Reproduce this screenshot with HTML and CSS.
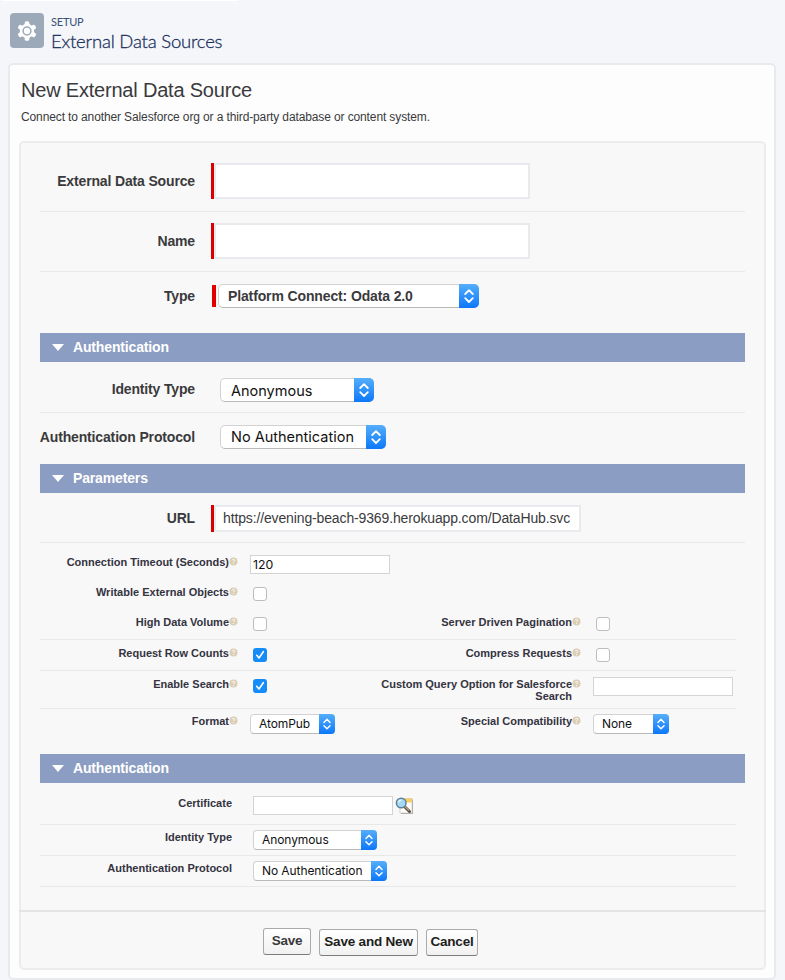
FILE: index.html
```html
<!DOCTYPE html>
<html lang="en">
<head>
<meta charset="utf-8">
<title>External Data Sources</title>
<link rel="stylesheet" href="styles.css">
</head>
<body>
<svg class="defs" aria-hidden="true">
  <symbol id="updown" viewBox="0 0 20 24"><path d="M6.200 10 10 6.200l3.800 3.800M6.200 14.200 10 18l3.800-3.800"/></symbol>
  <symbol id="help" viewBox="0 0 9 9"><circle cx="4.500" cy="4.500" r="4" fill="#dccdb5"/><path d="M3.200 3.400c.2-1.500 2.700-1.300 2.600 0-.1.800-1.300.8-1.300 1.700M4.500 6.200v.9" fill="none" stroke="#fff" stroke-width="1"/></symbol>
  <symbol id="tick" viewBox="0 0 14 14"><path d="M3.700 7.300 6 10l4.300-6.300" fill="none" stroke="#fff" stroke-width="1.600" stroke-linecap="round" stroke-linejoin="round"/></symbol>
</svg>
<header class="page-head">
  <div class="gear">
    <svg viewBox="0 0 20 20" width="20" height="20">
      <g fill="#fff"><circle cx="10" cy="10" r="7.200"/>
      <g id="t"><rect x="7.700" y=".3" width="4.600" height="5" rx="1.500"/><rect x="7.700" y="14.700" width="4.600" height="5" rx="1.500"/></g>
      <use href="#t" transform="rotate(60 10 10)"/><use href="#t" transform="rotate(120 10 10)"/></g>
      <circle cx="10" cy="10" r="3.900" fill="none" stroke="#9ca9b8" stroke-width="1.500"/>
    </svg>
  </div>
  <div class="head-text"><p class="eyebrow">SETUP</p><h1>External Data Sources</h1></div>
</header>
<main class="card">
  <h2>New External Data Source</h2>
  <p class="intro">Connect to another Salesforce org or a third-party database or content system.</p>
  <form class="panel">
    <div class="fields">
      <div class="row r-source"><label><span>External Data Source</span></label><div class="box"></div></div>
      <div class="row r-name"><label><span>Name</span></label><div class="box"></div></div>
      <div class="row r-type"><label><span>Type</span></label><i class="bar"></i><div class="select strong w261"><span>Platform Connect: Odata 2.0</span><b><svg><use href="#updown"/></svg></b></div></div>

      <h3><i></i><span>Authentication</span></h3>
      <div class="row r-identity"><label><span>Identity Type</span></label><div class="select w154"><span>Anonymous</span><b><svg><use href="#updown"/></svg></b></div></div>
      <div class="row r-protocol"><label><span>Authentication Protocol</span></label><div class="select w166"><span>No Authentication</span><b><svg><use href="#updown"/></svg></b></div></div>

      <h3><i></i><span>Parameters</span></h3>
      <div class="row r-url"><label><span>URL</span></label><div class="box url"><span>https://evening-beach-9369.herokuapp.com/DataHub.svc</span></div></div>

      <div class="small r-timeout"><label><span>Connection Timeout (Seconds)</span><svg class="help"><use href="#help"/></svg></label><div class="input"><span>120</span></div></div>
      <div class="small r-write"><label><span>Writable External Objects</span><svg class="help"><use href="#help"/></svg></label><div class="check"></div></div>
      <div class="small r-volume line"><label><span>High Data Volume</span><svg class="help"><use href="#help"/></svg></label><div class="check"></div><label><span>Server Driven Pagination</span><svg class="help"><use href="#help"/></svg></label><div class="check"></div></div>
      <div class="small r-count line"><label><span>Request Row Counts</span><svg class="help"><use href="#help"/></svg></label><div class="check on"><svg><use href="#tick"/></svg></div><label><span>Compress Requests</span><svg class="help"><use href="#help"/></svg></label><div class="check"></div></div>
      <div class="small r-search line"><label><span>Enable Search</span><svg class="help"><use href="#help"/></svg></label><div class="check on"><svg><use href="#tick"/></svg></div><label><span>Custom Query Option for Salesforce<br>Search</span><svg class="help"><use href="#help"/></svg></label><div class="input"></div></div>
      <div class="small r-format"><label><span>Format</span><svg class="help"><use href="#help"/></svg></label><div class="select mini w85"><span>AtomPub</span><b><svg><use href="#updown"/></svg></b></div><label><span>Special Compatibility</span><svg class="help"><use href="#help"/></svg></label><div class="select mini w76"><span>None</span><b><svg><use href="#updown"/></svg></b></div></div>

      <h3><i></i><span>Authentication</span></h3>
      <div class="small auth r-cert line"><label><span>Certificate</span></label><div class="lookup"><div class="input"></div>
        <svg width="19" height="19" viewBox="0 0 19 18"><path d="M6 3h12v14.500H6z" fill="#aaa6a2"/><path d="M5 2h12v14.500H5z" fill="#fffdfa" stroke="#c7c2bd" stroke-width=".7"/><path d="M10 2h7v4h-7z" fill="#f8cf65"/><path d="m9 9.500 5.500 5.500" stroke="#55504d" stroke-width="3" stroke-linecap="round"/><path d="m9.500 9.500 4.500 4.500" stroke="#c49b73" stroke-width="1.200"/><circle cx="6.200" cy="6.500" r="4.800" fill="#a4d9f5" stroke="#608299" stroke-width="1.500"/><path d="M3.700 6c.2-1.500 1.200-2.300 2.700-2.300" fill="none" stroke="#e9f8ff" stroke-width="1.300"/></svg></div></div>
      <div class="small auth r-id2 line"><label><span>Identity Type</span></label><div class="select mini w124"><span>Anonymous</span><b><svg><use href="#updown"/></svg></b></div></div>
      <div class="small auth r-proto2 line"><label><span>Authentication Protocol</span></label><div class="select mini w134"><span>No Authentication</span><b><svg><use href="#updown"/></svg></b></div></div>
    </div>
    <footer><button type="button" class="save">Save</button><button type="button" class="save-new">Save and New</button><button type="button" class="cancel">Cancel</button></footer>
  </form>
</main>
</body>
</html>
```
FILE: styles.css
```css
* { box-sizing: border-box; }
body { margin: 0; height: 980px; overflow: hidden; background: linear-gradient(#fff, #fff) 2px 0 / 236px 1px no-repeat #f4f6fa; font-family: "Liberation Sans", Arial, sans-serif; color: #3a3a3c; }
h1, h2, h3, p { margin: 0; font-weight: 400; }
span { white-space: nowrap; }
.defs { position: absolute; width: 0; height: 0; }

.page-head { display: flex; height: 63px; padding: 13px 0 0 10px; gap: 7px; }
.gear { width: 34px; height: 35px; border-radius: 4px; background: #9ca9b8; display: flex; align-items: center; justify-content: center; }
.head-text { font-family: Lato, sans-serif; }
.eyebrow { font-size: 11px; line-height: 14px; padding-top: 2px; color: #3b5078; letter-spacing: -.2px; }
h1 { font-size: 18.500px; line-height: 24px; font-weight: 300; color: #1c315b; letter-spacing: -.2px; -webkit-text-stroke: .3px #1c315b; }

.card { margin: 0 9px 0 8px; height: 917px; border: 2px solid #e9eaee; border-radius: 5px; background: #fdfdfd; padding: 0 8px 0 9px; }
h2 { font-size: 20px; line-height: 24px; padding: 13px 0 0 2px; letter-spacing: -.2px; }
.intro { font-size: 12px; line-height: 16px; padding: 7px 0 0 2px; letter-spacing: -.12px; }
.panel { margin-top: 16px; height: 829px; border: 2px solid #ececed; border-radius: 5px; background: #f8f8f8; }
.fields { height: 767px; padding: 0 19px; }

.row { display: flex; border-bottom: 1px solid #e8e8e9; }
.row label { width: 155px; flex: none; display: flex; justify-content: flex-end; font-weight: 700; font-size: 14px; line-height: 16px; letter-spacing: -.15px; }
.r-source { height: 69px; padding-top: 20px; }
.r-name { height: 60px; padding-top: 11px; }
.r-source label, .r-name label { padding-top: 10px; margin-right: 19px; }
.r-type { height: 61px; padding-top: 12px; border: 0; }
.r-type label { padding-top: 4px; margin-right: 17px; }
.r-identity { height: 51px; padding-top: 16px; }
.r-protocol { height: 51px; padding-top: 12px; border: 0; }
.r-identity label, .r-protocol label { padding-top: 4px; margin-right: 25px; }
.r-identity label { padding-top: 3px; }
.r-url { height: 50px; padding-top: 12px; }
.r-url label { padding-top: 5px; margin-right: 19px; }

.box { width: 316px; height: 36px; background: #fff; border: 2px solid #e9eaee; box-shadow: -3px 0 #d90000; }
.url { width: 367px; height: 27px; padding-left: 7px; font-size: 14px; line-height: 23px; letter-spacing: -.135px; }
.bar { width: 4px; height: 22px; margin: 1px 2px 0 0; background: #e00000; }

h3 { height: 29px; background: #8b9dc2; color: #fff; display: flex; align-items: center; padding: 0 0 1px 12px; font-size: 14px; font-weight: 700; letter-spacing: -.15px; }
h3 i { width: 0; height: 0; border: 6px solid transparent; border-top: 7px solid #fff; border-bottom: 0; margin-right: 9px; }

.select { display: flex; height: 24px; border: 1px solid #d2d2d2; border-bottom-color: #b9b9b9; border-radius: 5px; background: #fff; color: #111; font: 14.500px/23px Inter, sans-serif; padding-left: 10px; }
.select b { width: 20px; height: 24px; margin: -1px -1px 0 auto; border-radius: 0 5px 5px 0; background: linear-gradient(#55aefa, #0c77f9); }
.select b svg { display: block; width: 100%; height: 100%; fill: none; stroke: #fff; stroke-width: 1.800; stroke-linecap: round; stroke-linejoin: round; }
.r-protocol .select { line-height: 22px; }
.strong { font: 700 14px/23px "Liberation Sans", sans-serif; color: #3a3a3c; letter-spacing: -.13px; padding-left: 9px; }
.w261 { width: 261px; } .w154 { width: 154px; } .w166 { width: 166px; }
.w85 { width: 85px; } .w76 { width: 76px; } .w124 { width: 124px; } .w134 { width: 134px; }
.mini { height: 20px; border-radius: 4px; font-size: 12px; line-height: 18px; padding-left: 8px; letter-spacing: -.08px; }
.mini b { width: 16px; height: 20px; border-radius: 0 4px 4px 0; }

.small { display: grid; grid-template-columns: 198px 152px 191px 155px; width: 696px; align-items: start; }
.small label { display: flex; justify-content: flex-end; text-align: right; font-size: 11px; font-weight: 700; line-height: 12px; color: #34333f; }
.help { width: 9px; height: 9px; margin-top: 1px; flex: none; }
.small > :nth-child(even) { margin-left: 12px; }
.small > .check:nth-child(even) { margin-left: 15px; }
.line { border-bottom: 1px solid #e8e8e9; }
.input { width: 140px; height: 19px; border: 1px solid #d4d4d4; background: #fff; font: 12.300px/18px Inter, sans-serif; color: #111; padding-left: 2px; }
.check { width: 14px; height: 14px; border: 1px solid #bdbdbd; border-radius: 3px; background: #fff; }
.on { border: 0; background: #168cf8; }
.on svg { display: block; width: 14px; height: 14px; }

.r-timeout { height: 37px; padding-top: 12px; }
.r-timeout label { margin-top: 1px; }
.r-write, .r-volume { height: 30px; padding-top: 7px; }
.r-write label, .r-volume label, .r-count label { margin-top: -1px; }
.r-count { height: 31px; padding-top: 8px; }
.r-search { height: 38px; padding-top: 6px; }
.r-search label { margin-top: 1px; }
.small.r-search > .check { margin-top: 2px; }
.r-format { height: 45px; padding-top: 5px; }
.r-format label { margin-top: 1px; }

.small.auth { grid-template-columns: 192px 1fr; }
.auth > :nth-child(even) { margin-left: 21px; }
.r-cert { height: 42px; padding-top: 13px; }
.r-cert label { margin-top: 1px; }
.r-id2 { height: 31px; padding-top: 5px; }
.r-id2 label { margin-top: 1px; }
.r-proto2 { height: 31px; padding-top: 5px; }
.r-proto2 label { margin-top: 1px; }
.lookup { display: flex; gap: 2px; }

footer { height: 58px; margin: 0 -2px; border-top: 2px solid #e4e4e5; display: flex; align-items: flex-start; padding: 16px 0 0 244px; gap: 8px; }
button { height: 27px; padding: 0; border: 1px solid #aaa; border-bottom-color: #7c7c7c; border-radius: 3px; background: linear-gradient(#fff, #f1f1f1); font: 700 13.500px/22px "Liberation Sans", sans-serif; letter-spacing: -.2px; color: #1e1e20; white-space: nowrap; padding-bottom: 2px; }
.save { width: 48px; color: #3a3a3c; }
.save-new { width: 99px; margin-top: 1px; }
.cancel { width: 52px; margin-top: 1px; }
```
